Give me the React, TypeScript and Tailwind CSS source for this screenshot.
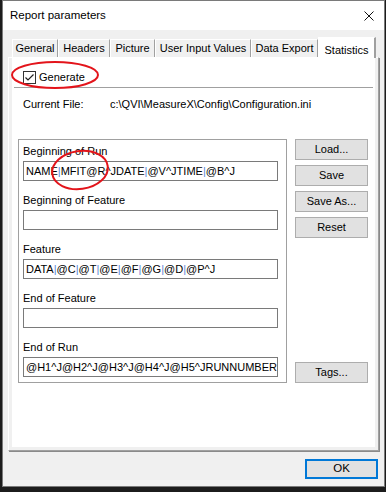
import React from 'react';

const tabs = [
    { label: 'General', w: 'w-[46px]' },
    { label: 'Headers', w: 'w-[52px]' },
    { label: 'Picture', w: 'w-[45px]' },
    { label: 'User Input Values', w: 'w-[96px]' },
    { label: 'Data Export', w: 'w-[67px]' },
];

const fields = [
    { label: 'Beginning of Run', value: 'NAME|MFIT@R^JDATE|@V^JTIME|@B^J' },
    { label: 'Beginning of Feature', value: '' },
    { label: 'Feature', value: 'DATA|@C|@T|@E|@F|@G|@D|@P^J' },
    { label: 'End of Feature', value: '' },
    { label: 'End of Run', value: '@H1^J@H2^J@H3^J@H4^J@H5^JRUNNUMBER' },
];

// pipes show up a bit blue in the original text boxes
function FieldText({ value }: { value: string }) {
    const parts = value.split('|');
    return (
        <span className="whitespace-nowrap">
            {parts.map((p, i) => (
                <React.Fragment key={i}>
                    {i > 0 && <span className="text-[#5a86d8]">|</span>}
                    {p}
                </React.Fragment>
            ))}
        </span>
    );
}

function WinButton({ children, className = '' }: { children: React.ReactNode; className?: string }) {
    return (
        <button className={`h-[21px] w-[73px] bg-[#e1e1e1] border border-[#adadad] text-[11px] text-black flex items-center justify-center ${className}`}>
            {children}
        </button>
    );
}

export default function App() {
    return (
        <div className="relative w-[386px] h-[492px] bg-[#1c1c1c] font-['Liberation_Sans',Arial,sans-serif] text-black overflow-hidden">
            <div className="ml-[2px] w-[383px] h-[487px] border border-[#7a7a7a] flex flex-col bg-[#f0f0f0]">
                {/* title bar */}
                <div className="h-[29px] bg-white flex items-center justify-between pl-[7px] pr-[10px]">
                    <span className="text-[11.5px]">Report parameters</span>
                    <svg width="10" height="10" viewBox="0 0 10 10">
                        <path d="M0.5 0.5 L9.5 9.5 M9.5 0.5 L0.5 9.5" stroke="#111" strokeWidth="1" />
                    </svg>
                </div>

                {/* body */}
                <div className="flex-1 flex flex-col px-[5px] pt-[7px]">
                    <div className="h-[20px] flex items-end pl-[4px]">
                        {tabs.map((t) => (
                            <div
                                key={t.label}
                                className={`${t.w} h-[18px] bg-[#f0f0f0] border-l border-t border-white border-r border-r-[#a0a0a0] flex items-center justify-center text-[11px]`}
                            >
                                {t.label}
                            </div>
                        ))}
                        <div className="relative z-10 w-[58px] h-[21px] -mb-[1px] bg-white border-l border-t border-white border-r-2 border-r-[#a0a0a0] flex items-center justify-center pt-[5px] text-[11px]">
                            Statistics
                        </div>
                    </div>

                    {/* tab page */}
                    <div className="h-[394px] bg-[#f0f0f0] border-l border-t border-white border-r border-b border-r-[#a0a0a0] border-b-[#a0a0a0] shadow-[1px_1px_0_#8a8a8a] px-[3px] pb-[3px]">
                        <div className="h-full bg-white flex flex-col text-[11px]">
                            <div className="pt-[12px] pl-[11px] flex items-center h-[26px]">
                                <div className="w-[13px] h-[13px] border border-[#333] bg-white flex items-center justify-center">
                                    <svg width="11" height="11" viewBox="0 0 11 11">
                                        <path d="M1.5 5.5 L4 8 L9.5 2.5" stroke="#222" strokeWidth="1.2" fill="none" />
                                    </svg>
                                </div>
                                <span className="ml-[3px] leading-[14px]">Generate</span>
                            </div>

                            <div className="mt-[3px] mx-[2px] border-t border-[#a0a0a0]" />

                            <div className="mt-[9px] pl-[11px] flex leading-[14px]">
                                <span className="w-[87px]">Current File:</span>
                                <span>c:\QVI\MeasureX\Config\Configuration.ini</span>
                            </div>

                            <div className="mt-[28px] pl-[6px] flex">
                                <div className="w-[269px] border border-[#a0a0a0] pt-[4px] pb-[5px] px-[4px] flex flex-col gap-[12px]">
                                    {fields.map((f) => (
                                        <div key={f.label} className="flex flex-col">
                                            <span className="h-[14px] leading-[14px] mb-[3px]">{f.label}</span>
                                            <div className="h-[20px] w-[255px] border border-[#7a7a7a] bg-white pl-[2px] flex items-center overflow-hidden leading-[14px]">
                                                <FieldText value={f.value} />
                                            </div>
                                        </div>
                                    ))}
                                </div>

                                <div className="ml-[8px] flex flex-col gap-[5px]">
                                    <WinButton>Load...</WinButton>
                                    <WinButton>Save</WinButton>
                                    <WinButton>Save As...</WinButton>
                                    <WinButton>Reset</WinButton>
                                    <WinButton className="mt-auto">Tags...</WinButton>
                                </div>
                            </div>
                        </div>
                    </div>

                    <div className="mt-[8px] flex justify-end pr-[1px]">
                        <button className="w-[73px] h-[20px] bg-[#e1e1e1] border-2 border-[#0078d7] text-[11.5px] flex items-center justify-center">
                            OK
                        </button>
                    </div>
                </div>
            </div>

            {/* red annotation marks */}
            <svg className="absolute left-0 top-0 pointer-events-none" width="386" height="492">
                <ellipse cx="55" cy="75" rx="43" ry="13" fill="none" stroke="#e3141b" strokeWidth="2" />
                <ellipse cx="80" cy="170" rx="28" ry="19" fill="none" stroke="#e3141b" strokeWidth="2" transform="rotate(-8 80 170)" />
            </svg>
        </div>
    );
}
